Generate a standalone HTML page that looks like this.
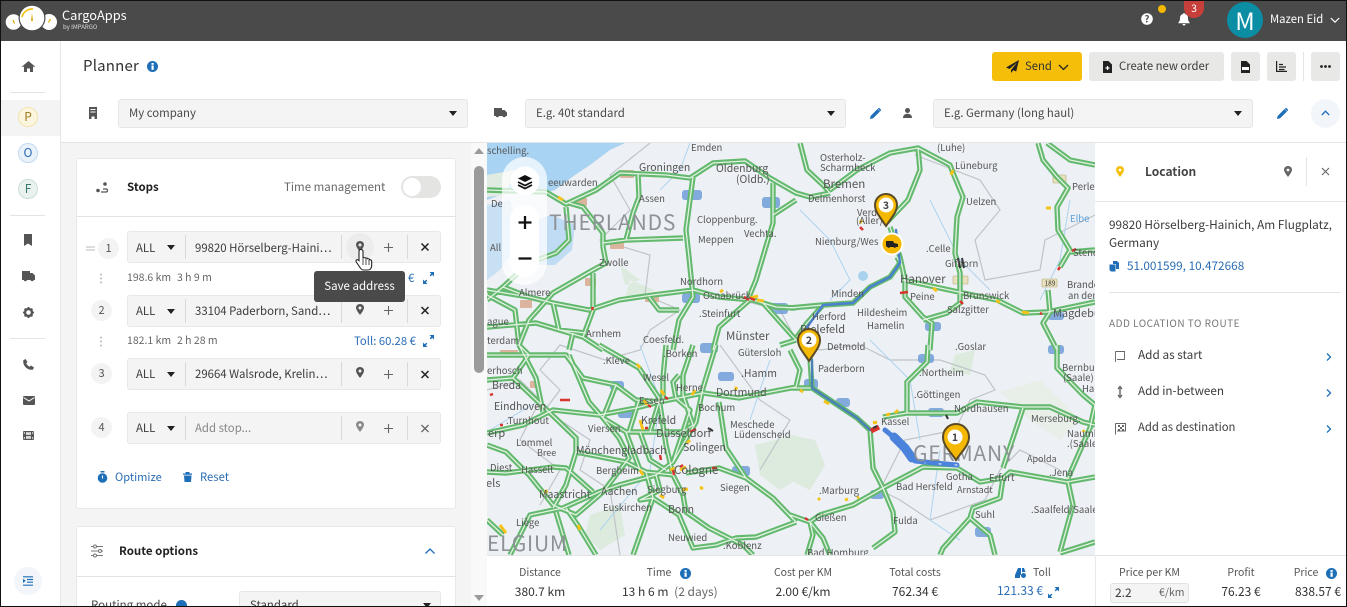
<!DOCTYPE html>
<html><head><meta charset="utf-8"><style>
*{box-sizing:border-box}
html,body{margin:0;padding:0;width:1347px;height:607px;overflow:hidden;background:#fff}
body{position:relative;font-family:"Noto Sans CJK SC","Liberation Sans",sans-serif;color:#3c3c3c;font-size:13px}
.a{position:absolute}
.t{position:absolute;white-space:nowrap;line-height:20px;height:20px}
.sel{position:absolute;background:#f4f4f4;border:1px solid #e6e6e6;border-radius:3px;height:29px;top:99px;line-height:26px;padding-left:10px;font-size:11.400px;color:#4a4a4a}
.car{position:absolute;width:0;height:0;border-left:4.5px solid transparent;border-right:4.5px solid transparent;border-top:5px solid #222}
.btn{position:absolute;top:52px;height:29px;background:#e8e8e7;border-radius:3px}
.row{position:absolute;left:127px;width:314px;background:#f4f4f4;border:1px solid #e8e8e8;border-radius:3px;height:32px}
.num{position:absolute;width:21px;height:21px;border-radius:50%;background:#f3f3f3;font-size:11px;line-height:21px;text-align:center;color:#555}
.mi{position:absolute;width:20px;height:20px;border-radius:50%;font-size:12px;font-weight:700;text-align:center;line-height:18px}
.hl{position:absolute;height:1px;background:#e4e4e4}
.g{font-size:10.500px;color:#666}
.b{color:#2a6db5}
.lab{font-size:10.500px;color:#555;text-align:center}
.val{font-size:12px;color:#333;text-align:center}
.rt{font-size:11.400px}
svg{position:absolute;overflow:visible}
</style></head><body>

<!-- header -->
<div class="a" style="left:0;top:0;width:1347px;height:41px;background:#4a4a4a"></div>
<svg style="left:0;top:0" width="140" height="41">
<circle cx="13.5" cy="22" r="7.8" fill="#fff"/><circle cx="49" cy="22" r="8" fill="#fff"/>
<circle cx="32" cy="18" r="13.5" fill="#4a4a4a"/><circle cx="32" cy="18" r="12.3" fill="#fff"/>
<path d="M22 17A10.5 10.5 0 0 1 33 9" stroke="#f5bf09" stroke-width="1.6" fill="none"/>
<path d="M31 21L32 13L33 21Z" fill="#e0a800"/><path d="M13 20l1.5 3.5" stroke="#e0a800" stroke-width="1.2"/><path d="M50.500 19l-2 3.500" stroke="#e0a800" stroke-width="1.2"/>
</svg>
<div class="t" style="left:62px;top:5px;color:#fff;font-size:12.800px">CargoApps</div>
<div class="t" style="left:63px;top:17px;color:#ddd;font-size:6px">by IMPARGO</div>
<svg style="left:1141px;top:13px" width="12" height="12"><circle cx="6" cy="6" r="5.800" fill="#fff"/><text x="6" y="9.500" font-size="9.500" font-weight="700" text-anchor="middle" fill="#4a4a4a">?</text></svg>
<div class="a" style="left:1158px;top:5px;width:8px;height:8px;border-radius:50%;background:#f5b800"></div>
<svg style="left:1178px;top:13px" width="12" height="13"><path d="M6 0c.7 0 1 .5 1 1 2 .5 3 2 3 4 0 2.500.7 3.500 1.600 4.500v.7H.4v-.7C1.300 8.500 2 7.500 2 5c0-2 1-3.500 3-4 0-.5.3-1 1-1zM4.500 11h3c0 1-.7 1.500-1.500 1.500S4.500 12 4.500 11z" fill="#fff"/></svg>
<div class="a" style="left:1184px;top:0;width:20px;height:18px;border-radius:0 0 10px 10px / 0 0 10px 10px;background:#c63f3b;color:#fff;font-size:10.500px;text-align:center;line-height:18px">3</div>
<div class="a" style="left:1227px;top:2px;width:36px;height:36px;border-radius:50%;background:#0b8da3;color:#fff;font-size:24px;text-align:center;line-height:36px">M</div>
<div class="t" style="left:1270px;top:9px;color:#fff;font-size:11.300px">Mazen Eid</div>
<svg style="left:1330px;top:17px" width="10" height="7"><path d="M.8 1L5 5.200 9.200 1" stroke="#fff" stroke-width="1.200" fill="none"/></svg>

<!-- title row -->
<div class="t" style="left:83px;top:56px;font-size:15px;letter-spacing:.2px;color:#333">Planner</div>
<svg style="left:147px;top:61px" width="11" height="11"><circle cx="5.500" cy="5.500" r="5.500" fill="#1f6fb8"/><rect x="4.500" y="4.500" width="2.200" height="4.300" fill="#fff"/><rect x="4.500" y="2" width="2.200" height="1.800" fill="#fff"/></svg>

<div class="btn" style="left:992px;width:90px;background:#f5bf09"></div>
<svg style="left:1006px;top:60px" width="13" height="13"><path d="M13 0L0 7.500l3.500 1.500L11 2.500 5 10v3l2.200-2.700 3 1.200z" fill="#222"/></svg>
<div class="t" style="left:1025px;top:56px;font-size:11.300px;color:#333">Send</div>
<svg style="left:1058px;top:64px" width="11" height="7"><path d="M1 1l4.500 4.500L10 1" stroke="#222" stroke-width="1.300" fill="none"/></svg>
<div class="btn" style="left:1089px;width:135px"></div>
<svg style="left:1103px;top:61px" width="9" height="12"><path d="M0 0h5.500L9 3.500V12H0z" fill="#222"/><path d="M4.500 5v4M2.500 7h4" stroke="#fff" stroke-width="1.200"/></svg>
<div class="t" style="left:1119px;top:56px;font-size:11.300px;color:#3c3c3c">Create new order</div>
<div class="btn" style="left:1231px;width:29px"></div>
<svg style="left:1241px;top:61px" width="9" height="12"><path d="M0 0h5.500L9 3.500V12H0z" fill="#222"/><rect x="1" y="6" width="7" height="3" fill="#fff"/></svg>
<div class="btn" style="left:1267px;width:29px"></div>
<svg style="left:1276px;top:61px" width="11" height="11"><path d="M.6 0v10.400H11" stroke="#222" stroke-width="1.200" fill="none"/><path d="M3 3.500h4M3 6h7M3 8.500h5.500" stroke="#222" stroke-width="1.300"/></svg>
<div class="a" style="left:1303px;top:52px;width:1px;height:29px;background:#e4e4e4"></div>
<div class="btn" style="left:1311px;width:29px"></div>
<svg style="left:1320px;top:65px" width="11" height="3"><circle cx="1.500" cy="1.500" r="1.400" fill="#222"/><circle cx="5.500" cy="1.500" r="1.400" fill="#222"/><circle cx="9.500" cy="1.500" r="1.400" fill="#222"/></svg>

<!-- selects row -->
<svg style="left:89px;top:107px" width="8" height="12"><path d="M0 0h8v12H5.500V9.500h-3V12H0z" fill="#555"/><path d="M1.500 2.500h5M1.500 5h5" stroke="#fff" stroke-width="1"/></svg>
<div class="sel" style="left:118px;width:350px">My company</div><div class="car" style="left:449px;top:111px"></div>
<svg style="left:494px;top:108px" width="13" height="10"><path d="M0 0h8v2h2.500L13 4.500V8h-1.200a1.700 1.700 0 0 1-3.300 0H5a1.700 1.700 0 0 1-3.300 0H0z" fill="#555"/></svg>
<div class="sel" style="left:525px;width:321px">E.g. 40t standard</div><div class="car" style="left:827px;top:111px"></div>
<svg class="p" style="left:870px;top:108px" width="11" height="11"><path d="M0 11l.6-3L7.500 1 10 3.500 3 10.400zM8.300.3c.4-.4 1-.4 1.400 0l1 1c.4.400.4 1 0 1.400l-.5.500L7.800.8z" fill="#1f6fb8"/></svg>
<svg style="left:903px;top:108px" width="9" height="10"><circle cx="4.500" cy="2.500" r="2.500" fill="#555"/><path d="M0 10c0-3 2-4.300 4.500-4.300S9 7 9 10z" fill="#555"/></svg>
<div class="sel" style="left:933px;width:320px">E.g. Germany (long haul)</div><div class="car" style="left:1234px;top:111px"></div>
<svg style="left:1277px;top:108px" width="11" height="11"><path d="M0 11l.6-3L7.500 1 10 3.500 3 10.400zM8.300.3c.4-.4 1-.4 1.400 0l1 1c.4.400.4 1 0 1.400l-.5.500L7.800.8z" fill="#1f6fb8"/></svg>
<div class="a" style="left:1311px;top:99px;width:29px;height:29px;border-radius:50%;background:#f2f6fa"></div>
<svg style="left:1321px;top:110px" width="9" height="6"><path d="M.8 5L4.500 1.200 8.200 5" stroke="#1f6fb8" stroke-width="1.300" fill="none"/></svg>

<!-- sidebar -->
<div class="a" style="left:60px;top:41px;width:1px;height:566px;background:#e6e6e6"></div>
<div class="a" style="left:1px;top:100px;width:59px;height:36px;background:#f4f4f4"></div>
<div class="hl" style="left:10px;top:92px;width:35px"></div>
<div class="hl" style="left:10px;top:215px;width:35px"></div>
<div class="hl" style="left:10px;top:338px;width:35px"></div>
<svg style="left:22px;top:61px" width="13" height="11"><path d="M6.500 0L13 5.500l-.8.800L11 5.300V11H8V7.500H5V11H2V5.300L.8 6.300 0 5.500z" fill="#555"/></svg>
<div class="mi" style="left:18px;top:107px;background:#fdf6df;border:1px solid #f3e3ae;color:#9b7b1e;font-weight:400">P</div>
<div class="mi" style="left:18px;top:143px;background:#e9f1f9;border:1px solid #c3d9ee;color:#2a6db5;font-weight:400">O</div>
<div class="mi" style="left:18px;top:179px;background:#e9f2ee;border:1px solid #c9dfd6;color:#3a7a70;font-weight:400">F</div>
<svg style="left:24px;top:234px" width="8" height="12"><path d="M0 0h8v12L4 9.500 0 12z" fill="#555"/></svg>
<svg style="left:22px;top:271px" width="13" height="11"><path d="M0 0h8v2h2.500L13 4.500V9h-1.200a1.700 1.700 0 0 1-3.300 0H5a1.700 1.700 0 0 1-3.300 0H0z" fill="#555"/></svg>
<svg style="left:23px;top:307px" width="11" height="11"><circle cx="5.500" cy="5.500" r="3.500" fill="none" stroke="#555" stroke-width="2.400"/><path d="M5.500 0v2M5.500 9v2M0 5.500h2M9 5.500h2M1.600 1.600l1.400 1.400M8 8l1.400 1.400M1.600 9.400L3 8M8 3l1.400-1.400" stroke="#555" stroke-width="1.800"/></svg>
<svg style="left:23px;top:359px" width="11" height="11"><path d="M2.500 0L4.500 3 3.200 4.300c.7 1.500 1.900 2.700 3.500 3.500L8 6.500l3 2-1.200 2.200C4.500 11.500-.5 6.500.3 1.200z" fill="#555"/></svg>
<svg style="left:23px;top:396px" width="12" height="9"><rect width="12" height="9" rx="1" fill="#555"/><path d="M.5 1.500L6 5l5.500-3.500" stroke="#fff" stroke-width="1" fill="none"/></svg>
<svg style="left:23px;top:431px" width="11" height="9"><rect width="11" height="9" rx="1" fill="#555"/><rect x="3" y="1.200" width="5" height="2.700" fill="#ddd"/><rect x="3" y="5.100" width="5" height="2.700" fill="#ddd"/><rect x=".8" y="1.200" width="1.200" height="1.600" fill="#ddd"/><rect x=".8" y="6.200" width="1.200" height="1.600" fill="#ddd"/><rect x="9" y="1.200" width="1.200" height="1.600" fill="#ddd"/><rect x="9" y="6.200" width="1.200" height="1.600" fill="#ddd"/></svg>
<div class="a" style="left:14px;top:567px;width:28px;height:28px;border-radius:50%;background:#f2f6fa"></div>
<svg style="left:23px;top:576px" width="10" height="10"><path d="M0 .8h10M4 3.500h6M4 6.200h6M0 9.200h10" stroke="#1f6fb8" stroke-width="1.200"/><path d="M0 2.800l2.800 2L0 7z" fill="#1f6fb8"/></svg>

<!-- left panel -->
<div class="a" style="left:61px;top:142px;width:410px;height:465px;background:#f4f4f4"></div>
<div class="a" style="left:471px;top:142px;width:16px;height:465px;background:#f9f9f9"></div>
<div class="a" style="left:474px;top:166px;width:10px;height:207px;border-radius:5px;background:#9b9b9b"></div>
<div class="a" style="left:474px;top:148px;border-left:5px solid transparent;border-right:5px solid transparent;border-bottom:6px solid #9b9b9b"></div>
<div class="a" style="left:474px;top:595px;border-left:5px solid transparent;border-right:5px solid transparent;border-top:6px solid #9b9b9b"></div>
<div class="a" style="left:61px;top:142px;width:1286px;height:1px;background:#e4e4e4"></div>

<div class="a" style="left:76px;top:158px;width:380px;height:351px;background:#fff;border:1px solid #e8e8e8;border-radius:3px"></div>
<div class="hl" style="left:76px;top:216px;width:380px"></div>
<div class="a" style="left:76px;top:526px;width:380px;height:90px;background:#fff;border:1px solid #e8e8e8;border-radius:3px"></div>
<div class="hl" style="left:76px;top:576px;width:380px"></div>
<svg style="left:96px;top:182px" width="12" height="11"><circle cx="2" cy="8.500" r="1.800" fill="#555"/><circle cx="9" cy="2" r="1.800" fill="#555"/><path d="M5 10h5c2 0 2-3 0-3H7" stroke="#555" stroke-width="1.200" fill="none"/></svg>
<div class="t" style="left:127px;top:177px;font-weight:700;font-size:11.500px;color:#222">Stops</div>
<div class="t" style="left:284px;top:177px;font-size:11.500px;color:#666">Time management</div>
<div class="a" style="left:401px;top:176px;width:40px;height:22px;border-radius:11px;background:#e4e4e2"></div>
<div class="a" style="left:403px;top:178px;width:18px;height:18px;border-radius:50%;background:#fff"></div>

<!-- row 1 -->
<div class="a" style="left:86px;top:246px;width:9px;height:1.500px;background:#ddd"></div><div class="a" style="left:86px;top:249px;width:9px;height:1.500px;background:#ddd"></div>
<div class="num" style="left:98px;top:238px">1</div>
<div class="row" style="top:231px"></div>
<div class="t rt" style="left:136px;top:238px">ALL</div><div class="car" style="left:167px;top:245px"></div>
<div class="a" style="left:185px;top:235px;width:1px;height:24px;background:#d8d8d8"></div>
<div class="t rt" style="left:195px;top:238px">99820 Hörselberg-Haini…</div>
<div class="a" style="left:341px;top:235px;width:1px;height:24px;background:#d8d8d8"></div>
<div class="a" style="left:346px;top:233px;width:28px;height:28px;border-radius:50%;background:#ececec"></div>
<div class="a" style="left:407px;top:235px;width:1px;height:24px;background:#d8d8d8"></div>
<!-- row 2 -->
<div class="num" style="left:91px;top:300px">2</div>
<div class="row" style="top:295px"></div>
<div class="t rt" style="left:136px;top:301px">ALL</div><div class="car" style="left:167px;top:309px"></div>
<div class="a" style="left:185px;top:299px;width:1px;height:24px;background:#d8d8d8"></div>
<div class="t rt" style="left:195px;top:301px">33104 Paderborn, Sand…</div>
<div class="a" style="left:341px;top:299px;width:1px;height:24px;background:#d8d8d8"></div>
<div class="a" style="left:407px;top:299px;width:1px;height:24px;background:#d8d8d8"></div>
<!-- row 3 -->
<div class="num" style="left:91px;top:363px">3</div>
<div class="row" style="top:358px"></div>
<div class="t rt" style="left:136px;top:364px">ALL</div><div class="car" style="left:167px;top:372px"></div>
<div class="a" style="left:185px;top:362px;width:1px;height:24px;background:#d8d8d8"></div>
<div class="t rt" style="left:195px;top:364px">29664 Walsrode, Krelin…</div>
<div class="a" style="left:341px;top:362px;width:1px;height:24px;background:#d8d8d8"></div>
<div class="a" style="left:407px;top:362px;width:1px;height:24px;background:#d8d8d8"></div>
<!-- row 4 -->
<div class="num" style="left:91px;top:417px">4</div>
<div class="row" style="top:412px"></div>
<div class="t rt" style="left:136px;top:418px">ALL</div><div class="car" style="left:167px;top:426px"></div>
<div class="a" style="left:185px;top:416px;width:1px;height:24px;background:#d8d8d8"></div>
<div class="t rt" style="left:195px;top:418px;color:#888">Add stop...</div>
<div class="a" style="left:341px;top:416px;width:1px;height:24px;background:#d8d8d8"></div>
<div class="a" style="left:407px;top:416px;width:1px;height:24px;background:#d8d8d8"></div>

<svg style="left:0;top:0" width="1347" height="607">
<path d="M360 241c-2.700 0-4 2-4 3.800 0 2.500 4 7.200 4 7.200s4-4.700 4-7.200c0-1.800-1.300-3.800-4-3.800z" fill="#555"/><circle cx="360" cy="245" r="1.500" fill="#ececec"/>
<path d="M360 304c-2.700 0-4 2-4 3.800 0 2.500 4 7.200 4 7.200s4-4.700 4-7.200c0-1.800-1.300-3.800-4-3.800z" fill="#555"/><circle cx="360" cy="308" r="1.500" fill="#f4f4f4"/>
<path d="M360 367c-2.700 0-4 2-4 3.800 0 2.500 4 7.200 4 7.200s4-4.700 4-7.200c0-1.800-1.300-3.800-4-3.800z" fill="#555"/><circle cx="360" cy="371" r="1.500" fill="#f4f4f4"/>
<path d="M360 421c-2.700 0-4 2-4 3.800 0 2.500 4 7.200 4 7.200s4-4.700 4-7.200c0-1.800-1.300-3.800-4-3.800z" fill="#8a8a8a"/><circle cx="360" cy="425" r="1.500" fill="#f4f4f4"/>
<path d="M384 247.500h9M388.500 243v9M384 310.500h9M388.500 306v9M384 374.500h9M388.500 370v9M384 428.500h9M388.500 424v9" stroke="#666" stroke-width="1.100"/>
<path d="M421.500 243.500l7 7M428.500 243.500l-7 7M421.500 307l7 7M428.500 307l-7 7M421.500 371l7 7M428.500 371l-7 7" stroke="#222" stroke-width="1.500"/>
<path d="M421.500 425l7 7M428.500 425l-7 7" stroke="#666" stroke-width="1.300"/>
<path d="M101 274.500v.01M101 278.500v.01M101 282.500v.01M101 337.500v.01M101 341.500v.01M101 345.500v.01" stroke="#bbb" stroke-width="2" stroke-linecap="round"/>
<path d="M423 284v-4.500l4.500 4.500zM434 272v4.500l-4.500-4.500zM423 347v-4.500l4.500 4.500zM434 335v4.500l-4.500-4.500z" fill="#1f6fb8"/>
<path d="M425 282l1.800-1.800M432 274l-1.800 1.800M425 345l1.800-1.800M432 337l-1.800 1.800" stroke="#1f6fb8" stroke-width="1.500"/>
<circle cx="102.500" cy="478" r="4.800" fill="#1f6fb8"/><rect x="100.500" y="471" width="4" height="1.500" fill="#1f6fb8"/><path d="M102.500 475.500v3" stroke="#fff" stroke-width="1.100"/>
<path d="M183 473.500h9v1.200h-9zM185.500 472h4v1.500h-4zM184 475.500h7.500l-.5 6.500h-6.500z" fill="#1f6fb8"/>
<path d="M91 546.500h12M91 551h12M91 555.500h12" stroke="#777" stroke-width="1"/><circle cx="95" cy="546.500" r="1.500" fill="#fff" stroke="#777"/><circle cx="100" cy="551" r="1.500" fill="#fff" stroke="#777"/><circle cx="95" cy="555.500" r="1.500" fill="#fff" stroke="#777"/>
<path d="M425.500 553.500l4.500-4.500 4.500 4.500" stroke="#1f6fb8" stroke-width="1.300" fill="none"/>
</svg>

<div class="t g" style="left:127px;top:268px">198.6 km</div><div class="t g" style="left:177px;top:268px">3 h 9 m</div>
<div class="t b" style="left:408px;top:268px;font-size:11.300px">€</div>
<div class="t g" style="left:127px;top:331px">182.1 km</div><div class="t g" style="left:177px;top:331px">2 h 28 m</div>
<div class="t b" style="left:354px;top:331px;font-size:11.300px">Toll: 60.28 €</div>

<div class="t b" style="left:115px;top:467px;font-size:11.100px">Optimize</div>
<div class="t b" style="left:200px;top:467px;font-size:11.300px">Reset</div>

<div class="t" style="left:119px;top:541px;font-weight:700;font-size:11.500px;color:#222">Route options</div>
<div class="t" style="left:91px;top:595px;font-size:11.500px;color:#444">Routing mode</div>
<svg style="left:176px;top:600px" width="11" height="11"><circle cx="5.500" cy="5.500" r="5.500" fill="#1f6fb8"/></svg>
<div class="a" style="left:239px;top:591px;width:202px;height:29px;background:#f4f4f4;border:1px solid #e6e6e6;border-radius:3px;padding-left:10px;line-height:27px;font-size:11.400px">Standard</div>
<div class="car" style="left:423px;top:603px"></div>

<!-- map -->
<div class="a" style="left:487px;top:143px;width:608px;height:412px;overflow:hidden;background:#edf0f4">
<svg style="left:0;top:0" width="608" height="412" viewBox="487 143 608 412">
<defs>
<path id="rd" d="M487 190L546 192 566 204 596 190 620 173 666 175 690 178 713 163 745 161 770 178 796 193 810 197 830 193
M800 143L807 170 823 185 830 193M887 222L908 200 920 170 918 148 890 153 857 170 830 190
M918 148L950 165 953 173 963 197 957 217 955 253 960 273 960 297
M1038 143L1043 160 1057 177 1068 188 1057 207 1058 230 1070 250 1060 267M1047 143L1070 160 1095 165M1070 252L1095 250
M890 227L900 257 905 280 905 297 923 317 932 323 930 350
M903 280L940 288 963 293 997 300 1023 313 1047 312 1095 302M960 293L960 303 947 313 923 320M1048 290L1050 312 1043 323 1057 350
M790 308L823 305 853 303 870 287 890 277 900 263 897 257M823 305L807 323 797 337
M810 358L812 388 833 402 857 418 870 430M790 388L812 388M870 430L873 468 883 488 893 512 895 532 873 548
M883 488L923 467 957 468 980 482 1003 478 1010 472 1067 482 1095 477
M883 417L907 413 907 382 927 362 928 345M907 413L957 413 977 402 1023 407 1050 407 1083 422 1095 425M1023 408L1003 468
M1003 478L1000 498 973 508 970 518 990 535 995 555M970 518L943 548 940 555M1068 482L1073 505 1060 552
M1057 345L1057 368 1083 395 1095 405 1090 428 1068 478M790 515L810 522 823 538 830 555M810 522L820 515 853 505 883 488M1060 553L1095 542M810 522L813 535 807 555
M487 355L529 355 566 355 583 378 616 385 636 400 659 402 703 393 739 398 796 387
M487 433L523 425 553 410 599 415 636 408 659 402
M569 355L589 402 603 418 619 438 629 458 603 492 576 515 553 505
M599 345L639 368 659 398 666 445 673 475 683 495 686 512 709 528 743 545 753 555
M693 345L683 375 683 395 693 425 683 432 656 432 626 432 603 418
M716 345L703 388 696 422 673 462 656 475 619 485 599 492 563 508 530 515 510 555
M719 402L726 448 746 478 773 498 796 522M686 473L719 468 746 478
M487 472L506 473 553 467 566 468 593 492M487 445L506 452 529 475 553 505
M666 345L663 378 663 402M566 508L579 527 596 555M556 512L569 555M487 520L503 535
M633 555L653 498 646 472 626 462 576 452 566 485 553 508M513 378L549 412 576 438 576 452
M653 498L679 515 693 548 716 545 736 538 756 537 796 522M679 375L673 382 676 398M519 345L536 378 543 412
M487 290L529 297 553 303 589 310 619 300 653 295 693 290 719 297 753 300 776 307 796 308
M603 243L626 240 683 238M569 203L583 207 603 233 603 247 606 263 593 270 553 293 529 320 519 345
M566 207L569 240 556 253 529 263 503 287 487 300M638 173L639 197 633 213 626 240
M693 177L686 230 689 257 693 297 679 320 673 350M773 183L773 223 756 280 749 297M773 215L796 200
M593 273L593 310 583 337 603 350M649 297L659 310 679 310M553 303L559 330 586 333M487 327L536 323 583 337
M753 297L719 327 713 350M763 303L796 340M573 333L569 350M487 295L515 310 519 345M503 287L529 297
M796 340L780 345M796 387L800 370 790 350M487 380L513 378 529 355M529 355L519 345
M616 385L603 418M639 400L629 432M659 402L650 432M676 398L690 410 683 432M640 432L650 460 666 470M626 432L640 470M656 475L660 490 640 500 653 498M683 432L673 462M646 472L673 475"/>
</defs>
<!-- terrain -->
<path d="M487 143H625L610 150 590 165 575 175 555 190 540 195 520 190 500 195 487 200Z" fill="#a9d3f2"/>
<path d="M552 215L575 225 572 250 555 265 535 265 528 240 535 220Z" fill="#c0dcf4"/>
<path d="M487 205L510 200 520 240 500 270 487 280Z" fill="#c8e0f4"/>
<path d="M487 175L515 170 505 195 487 197Z" fill="#e0ebe2"/>
<path d="M1000 392L1040 380 1080 420 1060 440 1030 420Z" fill="#e8eee8"/>
<path d="M755 445L796 435 796 480 780 490 760 475Z" fill="#dcebdd"/>
<path d="M790 435L815 440 825 465 810 490 790 480Z" fill="#dcebdd"/>
<path d="M590 515L620 505 625 535 600 550 585 535Z" fill="#dcebdd"/>
<path d="M655 290L630 280 625 300ZM620 265L640 280 625 285Z" fill="#dcebdd"/>
<path d="M955 355L975 350 970 375 950 370Z" fill="#dcebdd"/>
<g fill="none" stroke="#c0c4c8" stroke-width="1.200">
<path d="M650 143L610 175 630 210 600 240 650 255 645 295 680 310 650 330 640 350 605 360 560 345 540 370 560 390 545 410 590 440 580 470 610 490 620 555"/>
<path d="M487 390L520 380 540 400 520 440 560 470 540 505"/>
<path d="M740 300L780 310 796 340 820 350 860 345 890 360 940 360 985 375 995 390 970 400 955 430 905 440 880 490 900 500 930 520 985 500 1000 470 1020 450 1060 470"/>
<path d="M915 155L980 180 1000 210 975 240 985 280 1040 270 1045 240 1095 215"/>
<path d="M720 345L760 400 790 420 760 470"/>
</g>
<g fill="none" stroke="#aed4f0" stroke-width="1">
<path d="M690 143L680 170 660 190M800 210L830 240 850 280 830 300M930 200L960 260 990 290M1070 200L1060 260 1040 300M870 340L910 380 920 440M640 345L660 400 650 470 600 530M770 360L750 420M490 430L540 400M940 450L930 520 960 540"/>
</g>
<circle cx="863" cy="276" r="5" fill="#a8d2ee"/>
<!-- junction halos -->
<g fill="#5f93d6" opacity=".75">
<rect x="682" y="190" width="20" height="10" rx="3"/><rect x="762" y="197" width="18" height="11" rx="3"/><rect x="682" y="293" width="18" height="10" rx="3"/><rect x="770" y="303" width="18" height="11" rx="3"/><rect x="700" y="343" width="18" height="10" rx="3"/>
<rect x="718" y="372" width="16" height="9" rx="3"/><rect x="610" y="381" width="14" height="9" rx="3"/><rect x="618" y="409" width="18" height="9" rx="3"/><rect x="732" y="466" width="18" height="10" rx="3"/>
<rect x="925" y="322" width="16" height="9" rx="3"/><rect x="1048" y="312" width="16" height="8" rx="3"/><rect x="1048" y="345" width="16" height="9" rx="3"/><rect x="918" y="354" width="16" height="9" rx="3"/><rect x="836" y="398" width="14" height="9" rx="3"/><rect x="928" y="408" width="16" height="9" rx="3"/><rect x="870" y="490" width="14" height="9" rx="3"/><rect x="975" y="527" width="16" height="10" rx="3"/><rect x="804" y="379" width="14" height="10" rx="3"/>
</g>
<g fill="#dcb39c"><rect x="620" y="170" width="14" height="8" rx="1"/><rect x="573" y="198" width="14" height="8" rx="1"/><rect x="610" y="241" width="14" height="8" rx="1"/><rect x="585" y="278" width="11" height="8" rx="1"/><rect x="645" y="294" width="14" height="8" rx="1"/><rect x="520" y="300" width="12" height="8" rx="1"/><rect x="500" y="350" width="18" height="6" rx="1"/><rect x="530" y="381" width="10" height="7" rx="1"/></g>
<g fill="#e9e0bc" stroke="#b6aa78" stroke-width=".6"><rect x="1053" y="175" width="13" height="8" rx="1"/><rect x="953" y="276" width="15" height="8" rx="1"/><rect x="1042" y="279" width="15" height="8" rx="1"/></g>
<text x="1050" y="285.500" font-size="6.500" text-anchor="middle" fill="#333">189</text>
<!-- roads -->
<use href="#rd" fill="none" stroke="#63b96d" stroke-width="5.400" stroke-linejoin="round"/>
<use href="#rd" fill="none" stroke="#e3f1e3" stroke-width="1.300" stroke-linejoin="round"/>
<!-- route -->
<g fill="none" stroke-linejoin="round" stroke-linecap="round">
<path d="M885 430L897 440 906 450 915 461 935 463 957 465" stroke="#4b82dc" stroke-width="5"/>
<path d="M894 437L905 448 912 458" stroke="#4b82dc" stroke-width="9"/>
<path d="M812 360L812 388 833 402 857 418 870 430" stroke="#4b7fb8" stroke-width="2.400"/>
<path d="M800 337L823 305 853 303 870 287 890 277 900 263 896 230" stroke="#4b7fd0" stroke-width="2.400"/>
<path d="M957 465L925 463" stroke="#fff" stroke-width="1" stroke-dasharray="2 14"/>
</g>
<!-- incidents -->
<g fill="none" stroke="#f5c21a" stroke-width="3" stroke-linecap="butt">
<path d="M563 200l-5-3M644 400l3 5M640 420l3 10M692 395l3-5M735 390l2-3M640 368l-3-4M661 390l3 5M690 440l-3 3M670 470l5-2M680 470l6-3M640 470l3 5M545 490l2 3M500 525l6 8M578 525l2 5M660 495l4 3M682 490l6-1M700 487l3 2M862 220l-2 3M953 170l-2 5M1046 208l5 0M1022 312l7 1M1000 302l-4-1M933 288l4 3M720 292l3-2M750 298l8-2M757 300l7 1M818 500l2-2M845 500l3-1M857 498l2-1M873 423l4-1M886 415l4-1M895 413l3-3M1084 432l-1-2M824 401l5 3M800 390l3 2"/>
</g>
<g fill="none" stroke="#d8332c" stroke-width="2.500">
<path d="M744 297l5 3M750 298l5 2M860 227l3 3M900 293l8-1M1072 251l4-2M1058 270l2-3M960 301l3 3M560 400l10 0M665 397l3 2M648 405l3 2M690 432l6-3M645 428l3 0M660 455l1 5M673 470l1 5M680 467l3-2M712 468l5 0M500 425l3 0M490 395l3-1M592 310l1-3M805 518l3 2M1040 313l2 1"/>
<path d="M871 431l8-4" stroke-width="5"/>
</g>
<g stroke="#333" stroke-width="2"><path d="M958 258l2 10M962 258l2 10M946 415l2 4M708 428l5 3M873 428l4-2"/></g>
<!-- labels -->
<g font-size="9.500" fill="#555">
<text x="487" y="154">schelling.</text><text x="691" y="151">Emden</text><text x="639" y="171" font-size="10.500">Groningen</text><text x="716" y="172" font-size="10.500">Oldenburg</text><text x="736" y="183" font-size="10.500">(Oldb.)</text><text x="548" y="186">eeuwarden</text><text x="639" y="202">Assen</text><text x="697" y="223">Cloppenburg.</text><text x="744" y="237">Vechta.</text><text x="698" y="243">Meppen</text><text x="599" y="266">Zwolle</text><text x="680" y="285">Nordhorn</text><text x="703" y="299">Osnabrück</text><text x="699" y="317">.Steinfurt</text><text x="726" y="340" font-size="11.500">Münster</text><text x="586" y="337">Arnhem</text><text x="643" y="343">Coesfeld.</text><text x="519" y="296">Almere</text><text x="487" y="344">terdam</text><text x="487" y="325">ague</text><text x="491" y="207">De</text><text x="490" y="251">All</text>
<text x="820" y="161">Osterholz-</text><text x="820" y="171">Scharmbeck</text><text x="823" y="188" font-size="11.500">Bremen</text><text x="808" y="202">Delmenhorst</text><text x="857" y="216">Verden</text><text x="856" y="224">(Aller)</text><text x="815" y="245">Nienburg/Wes</text><text x="926" y="252">.Celle</text><text x="966" y="205">Uelzen</text><text x="955" y="169">Lüneburg</text><text x="937" y="151">(Luhe)</text><text x="945" y="267">Gifhorn</text><text x="900" y="283" font-size="11.500">Hanover</text><text x="831" y="297">Minden</text><text x="910" y="300">Peine</text><text x="963" y="299">Brunswick</text><text x="947" y="313">Salzgitter</text><text x="857" y="316">Hildesheim</text><text x="812" y="320">Herford</text><text x="867" y="329">Hamelin</text><text x="800" y="333" font-size="11">Bielefeld</text><text x="827" y="350">Detmold</text><text x="955" y="350">.Goslar</text><text x="1072" y="190">Perleb</text><text x="1070" y="222" fill="#5b9ed8">Elbe</text><text x="1073" y="256">Stend</text><text x="1067" y="288">Brande</text><text x="1068" y="299">an der</text><text x="1053" y="317" font-size="11">Magdebu</text>
<text x="818" y="372">Paderborn</text><text x="919" y="376">.Northeim</text><text x="1062" y="371">Bernbu</text><text x="1063" y="381">(Saale)</text><text x="914" y="398">.Göttingen</text><text x="954" y="412">Nordhausen</text><text x="1031" y="422">Merseburg.</text><text x="881" y="425">Kassel</text><text x="1067" y="437">Naumb</text><text x="1067" y="447">.(Saale)</text><text x="1027" y="462" font-size="9">Apolda</text><text x="1049" y="476">.Jena</text><text x="946" y="480">Gotha</text><text x="989" y="481">Erfurt</text><text x="896" y="490">Bad Hersfeld</text><text x="957" y="493" font-size="9">Arnstadt</text><text x="819" y="494">.Marburg</text><text x="1031" y="513">.Saalfeld/Saale</text><text x="893" y="524">Fulda</text><text x="975" y="518">Suhl</text><text x="815" y="521">Gießen</text><text x="807" y="556">Bad Homburg</text><text x="1082" y="392">Hal</text>
<text x="738" y="356">Gütersloh</text><text x="663" y="357">.Borken</text><text x="603" y="364">.Kleve</text><text x="643" y="381">Wesel</text><text x="741" y="377" font-size="10.500">.Hamm</text><text x="716" y="396" font-size="10.500">Dortmund</text><text x="487" y="374">erhosch</text><text x="492" y="389" font-size="10.500">Breda</text><text x="676" y="391">Herne</text><text x="639" y="404">Essen</text><text x="698" y="411">Bochum</text><text x="494" y="410" font-size="10.500">Eindhoven</text><text x="506" y="424">.Turnhout</text><text x="641" y="424" font-size="10.500">Krefeld</text><text x="588" y="432">Viersen</text><text x="656" y="437" font-size="11">Düsseldorf</text><text x="730" y="428">Meschede</text><text x="734" y="438">Lüdenscheid</text><text x="488" y="437" font-size="11">erp</text><text x="516" y="446">Lommel</text><text x="537" y="456" font-size="9">Bree</text><text x="576" y="454" font-size="10.500">Mönchengladbach</text><text x="683" y="451" font-size="10.500">Solingen</text><text x="490" y="471">Diest</text><text x="521" y="473">Hasselt</text><text x="596" y="474">Bergheim</text><text x="674" y="474" font-size="11.500">Cologne</text><text x="720" y="491">Siegen</text><text x="486" y="487" font-size="11">els</text><text x="539" y="498" font-size="10.500">Maastricht</text><text x="601" y="495" font-size="10.500">Aachen</text><text x="647" y="493">Siegburg</text><text x="603" y="511">Euskirchen</text><text x="668" y="513" font-size="10.500">Bonn</text><text x="516" y="526">Liège</text><text x="668" y="541">Neuwied</text><text x="723" y="549">.Koblenz</text>
</g>
<g font-size="21" fill="#8e9196" letter-spacing=".8">
<text x="549" y="230">THERLANDS</text><text x="913" y="461">GERMANY</text><text x="487" y="551">ELGIUM</text>
</g>
<!-- pins -->
<g stroke="#5b4a26" stroke-width="2" fill="#f5b800">
<path d="M886 226C880 217 875 212 875 205A11 11 0 0 1 897 205C897 212 892 217 886 226Z"/>
<path d="M809 361C803 352 798 347 798 340A11 11 0 0 1 820 340C820 347 815 352 809 361Z"/>
<path d="M956 460C949 450 943 445 943 437A13 13 0 0 1 969 437C969 445 963 450 956 460Z"/>
</g>
<circle cx="886" cy="205" r="7.500" fill="#fff"/><circle cx="809" cy="340" r="7.500" fill="#fff"/><circle cx="955" cy="437" r="7.500" fill="#fff"/>
<g font-size="10.500" font-weight="700" text-anchor="middle" fill="#444"><text x="886" y="209">3</text><text x="809" y="344">2</text><text x="955" y="441">1</text></g>
<circle cx="892" cy="244" r="10.500" fill="#f5b800" stroke="#fff" stroke-width="2"/>
<path d="M886 241l7 0 1 2 4 1 0 3-2 0-1 1-2-1-3 0-1 1-2-1-1-1z" fill="#222"/>
<!-- controls -->
<rect x="502" y="157" width="45" height="128" rx="22.500" fill="#fff" fill-opacity=".72"/>
<circle cx="525" cy="181" r="14.500" fill="#fff"/>
<rect x="510" y="205" width="29" height="72" rx="14.500" fill="#fff"/>
<path d="M518 178.500l7-3.500 7 3.500-7 3.500z" fill="#111"/><path d="M518 182l7 3.500 7-3.500" fill="none" stroke="#111" stroke-width="1.700"/><path d="M518 185l7 3.500 7-3.500" fill="none" stroke="#111" stroke-width="1.700"/>
<path d="M518.500 222.500h13M525 216v13M518.500 258.500h13" stroke="#111" stroke-width="2.300"/>
</svg>
</div>

<!-- bottom bar -->
<div class="a" style="left:487px;top:555px;width:860px;height:52px;background:#fff;border-top:1px solid #e4e4e4"></div>
<div class="a" style="left:1095px;top:555px;width:1px;height:52px;background:#e8e8e8"></div>
<div class="t lab" style="left:500px;width:80px;top:563px">Distance</div>
<div class="t val" style="left:500px;width:80px;top:582px">380.7 km</div>
<div class="t lab" style="left:639px;width:40px;top:563px">Time</div>
<svg style="left:680px;top:568px" width="11" height="11"><circle cx="5.500" cy="5.500" r="5.500" fill="#1f6fb8"/><rect x="4.500" y="4.500" width="2.200" height="4.300" fill="#fff"/><rect x="4.500" y="2" width="2.200" height="1.800" fill="#fff"/></svg>
<div class="t val" style="left:622px;top:582px">13 h 6 m <span style="color:#666;margin-left:3px">(2 days)</span></div>
<div class="t lab" style="left:763px;width:80px;top:563px">Cost per KM</div>
<div class="t val" style="left:763px;width:80px;top:582px">2.00 €/km</div>
<div class="t lab" style="left:875px;width:80px;top:563px">Total costs</div>
<div class="t val" style="left:875px;width:80px;top:582px">762.34 €</div>
<svg style="left:1014px;top:567px" width="13" height="12"><path d="M4 1h3v7H1zM8 1h2l1.500 4H8z" fill="#1f6fb8"/><circle cx="9.500" cy="8.500" r="2.500" fill="#1f6fb8"/><rect x="1" y="8" width="5" height="3" fill="#1f6fb8"/></svg>
<div class="t lab" style="left:1033px;top:563px">Toll</div>
<div class="t val" style="left:997px;top:581px;color:#2a6db5">121.33 €</div>
<svg style="left:1048px;top:587px" width="11" height="11"><path d="M0 11V6.500L4.500 11zM11 0v4.500L6.500 0z" fill="#1f6fb8"/><path d="M2 9l1.800-1.800M9 2L7.200 3.800" stroke="#1f6fb8" stroke-width="1.500"/></svg>
<div class="t lab" style="left:1110px;width:79px;top:563px">Price per KM</div>
<div class="a" style="left:1110px;top:583px;width:79px;height:20px;background:#f4f4f4;border:1px solid #e2e2e2;border-radius:3px"></div>
<div class="t" style="left:1115px;top:583px;font-size:12px">2.2</div>
<div class="t" style="left:1159px;top:583px;font-size:10.500px;color:#666">€/km</div>
<div class="t lab" style="left:1221px;width:40px;top:563px">Profit</div>
<div class="t val" style="left:1211px;width:60px;top:582px">76.23 €</div>
<div class="t lab" style="left:1286px;width:40px;top:563px">Price</div>
<svg style="left:1326px;top:568px" width="11" height="11"><circle cx="5.500" cy="5.500" r="5.500" fill="#1f6fb8"/><rect x="4.500" y="4.500" width="2.200" height="4.300" fill="#fff"/><rect x="4.500" y="2" width="2.200" height="1.800" fill="#fff"/></svg>
<div class="t val" style="left:1288px;width:60px;top:582px">838.57 €</div>

<!-- right panel -->
<div class="a" style="left:1095px;top:143px;width:252px;height:412px;background:#fff"></div>
<div class="hl" style="left:1095px;top:201px;width:252px"></div>
<svg style="left:0;top:0" width="1347" height="607">
<path d="M1120 166c-2.700 0-4 2-4 3.800 0 2.500 4 7.200 4 7.200s4-4.700 4-7.200c0-1.800-1.300-3.800-4-3.800z" fill="#f5bf09"/><circle cx="1120" cy="170" r="1.400" fill="#fff"/>
<path d="M1288 166c-2.700 0-4 2-4 3.800 0 2.500 4 7.200 4 7.200s4-4.700 4-7.200c0-1.800-1.300-3.800-4-3.800z" fill="#666"/><circle cx="1288" cy="170" r="1.400" fill="#fff"/>
<path d="M1322 168l7 7M1329 168l-7 7" stroke="#666" stroke-width="1.100"/>
<path d="M1109.500 264.500h6v7h-4.500l-1.500-1.500z" fill="#1f6fb8"/><path d="M1113 261h4l2 2v6h-3v-5h-3z" fill="#1f6fb8"/>
<path d="M1115.500 351.500h9v8h-7.500M1115.500 351.500v10.500" stroke="#666" stroke-width=".9" fill="none"/>
<path d="M1120 387v10M1118 389l2-2.500 2 2.500M1118 395l2 2.500 2-2.500" stroke="#666" stroke-width="1.400" fill="none"/>
<path d="M1115.500 423.500h10v7.500h-8.500M1115.500 423.500v11" stroke="#666" stroke-width="1" fill="none"/><path d="M1118 425h2v2h-2zM1122 425h2v2h-2zM1120 427h2v2h-2zM1118 429h2v1.500h-2zM1122 429h2v1.500h-2z" fill="#666"/>
<path d="M1327 353.500l3.500 3.500-3.500 3.500M1327 389.500l3.500 3.500-3.500 3.500M1327 425.500l3.500 3.500-3.500 3.500" stroke="#1f6fb8" stroke-width="1.300" fill="none"/>
</svg>
<div class="a" style="left:1306px;top:157px;width:1px;height:29px;background:#e4e4e4"></div>
<div class="t" style="left:1145px;top:162px;font-weight:700;font-size:12px;color:#444">Location</div>
<div class="t" style="left:1109px;top:215px;font-size:11.800px">99820 Hörselberg-Hainich, Am Flugplatz,</div>
<div class="t" style="left:1109px;top:233px;font-size:11.800px">Germany</div>
<div class="t b" style="left:1127px;top:256px;font-size:11.800px">51.001599, 10.472668</div>
<div class="hl" style="left:1109px;top:292px;width:231px"></div>
<div class="t" style="left:1109px;top:313px;font-size:10px;letter-spacing:.5px;color:#777">ADD LOCATION TO ROUTE</div>
<div class="t" style="left:1138px;top:345px;font-size:11.800px">Add as start</div>
<div class="t" style="left:1138px;top:381px;font-size:11.700px">Add in-between</div>
<div class="t" style="left:1138px;top:417px;font-size:11.300px">Add as destination</div>

<!-- tooltip and cursor -->
<div class="a" style="left:314px;top:271px;width:91px;height:31px;background:#4a4a4a;border-radius:3px;color:#fff;font-size:11.500px;line-height:31px;text-align:center">Save address</div>
<svg style="left:355px;top:248px" width="20" height="24"><path d="M6 1.500c1.200 0 2 .8 2 2V10l1-.3c.8-.2 1.500.1 1.800.6.800-.4 1.700-.1 2.100.6.900-.3 1.800.2 2 1 .9-.2 1.800.3 1.800 1.400v4.200c0 2.400-1.500 4.500-3.500 4.500H8.500C7 22 6 21 5 19.500L1.300 14c-.6-1-.2-1.900.5-2.200.8-.4 1.500-.1 2.200.7V3.500c0-1.200.8-2 2-2z" fill="#fff" stroke="#222" stroke-width="1.100"/><path d="M8 11v6M11 11v6M14 12v5" stroke="#222" stroke-width=".8"/></svg>

<!-- screenshot frame -->
<div class="a" style="left:0;top:0;width:1347px;height:607px;border:1px solid #111;pointer-events:none"></div>
</body></html>
